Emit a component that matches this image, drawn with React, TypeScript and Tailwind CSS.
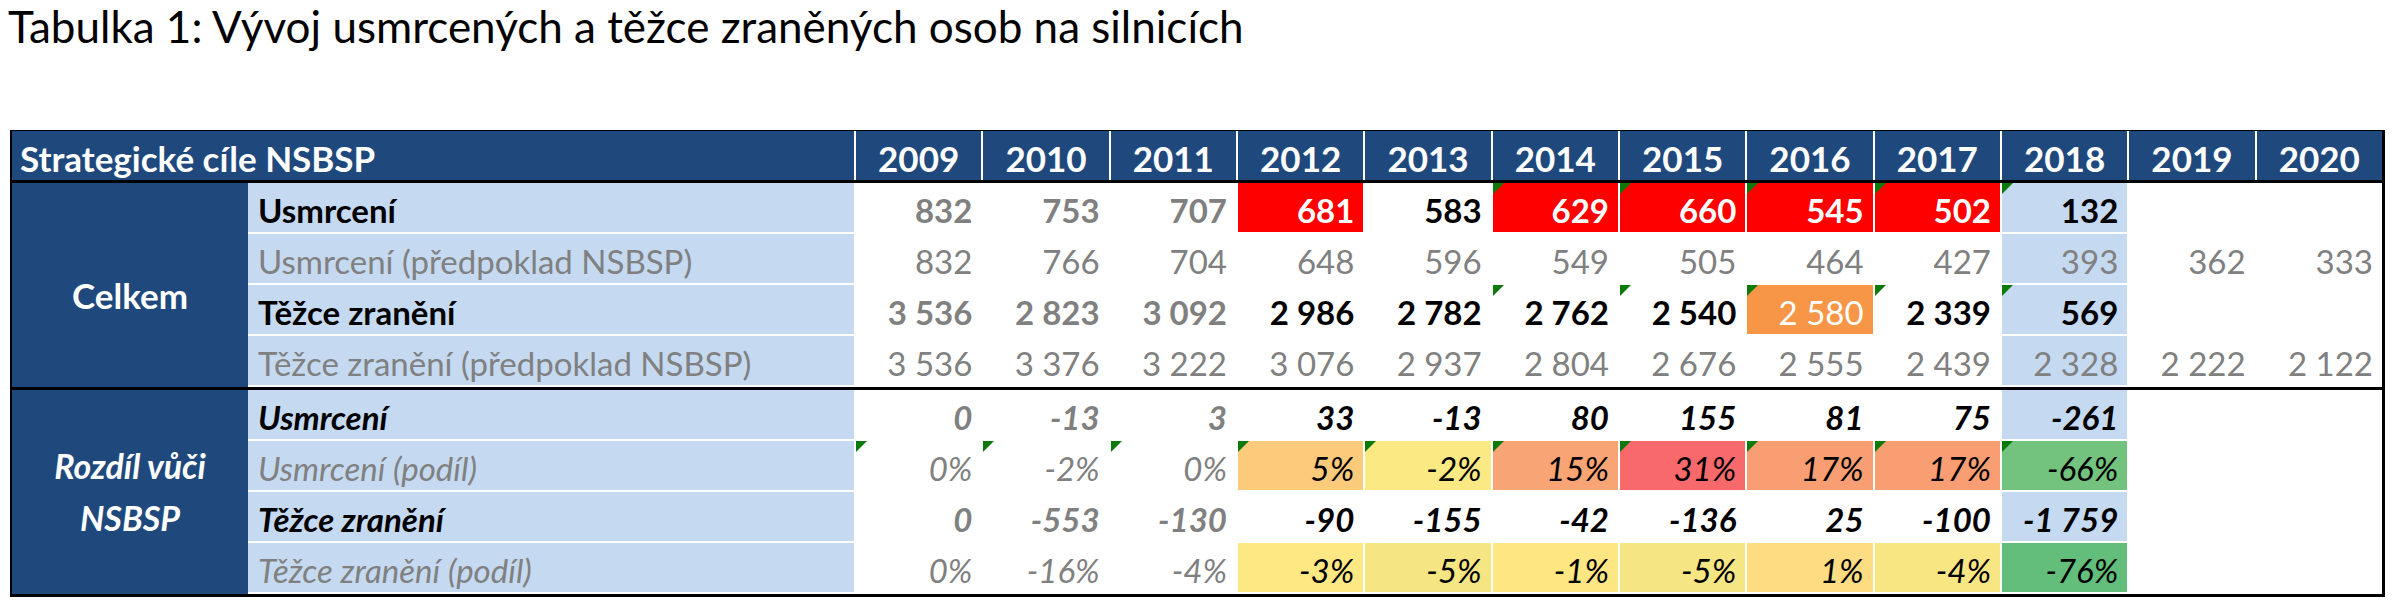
import React from 'react';

type Cell = {
  v: string;
  bg?: string;
  c?: 'g' | 'k' | 'w';
  b?: boolean;
  t?: boolean;
};

type Row = {
  label: string;
  labelBold: boolean;
  italic: boolean;
  cells: Cell[];
};

const years = [2009, 2010, 2011, 2012, 2013, 2014, 2015, 2016, 2017, 2018, 2019, 2020];

const E: Cell = { v: '' };

const section1: Row[] = [
  {
    label: 'Usmrcení',
    labelBold: true,
    italic: false,
    cells: [
      { v: '832', c: 'g', b: true },
      { v: '753', c: 'g', b: true },
      { v: '707', c: 'g', b: true },
      { v: '681', c: 'w', b: true, bg: 'red' },
      { v: '583', c: 'k', b: true },
      { v: '629', c: 'w', b: true, bg: 'red', t: true },
      { v: '660', c: 'w', b: true, bg: 'red', t: true },
      { v: '545', c: 'w', b: true, bg: 'red', t: true },
      { v: '502', c: 'w', b: true, bg: 'red', t: true },
      { v: '132', c: 'k', b: true, bg: 'lb', t: true },
      E,
      E,
    ],
  },
  {
    label: 'Usmrcení (předpoklad NSBSP)',
    labelBold: false,
    italic: false,
    cells: [
      { v: '832', c: 'g' },
      { v: '766', c: 'g' },
      { v: '704', c: 'g' },
      { v: '648', c: 'g' },
      { v: '596', c: 'g' },
      { v: '549', c: 'g' },
      { v: '505', c: 'g' },
      { v: '464', c: 'g' },
      { v: '427', c: 'g' },
      { v: '393', c: 'g', bg: 'lb' },
      { v: '362', c: 'g' },
      { v: '333', c: 'g' },
    ],
  },
  {
    label: 'Těžce zranění',
    labelBold: true,
    italic: false,
    cells: [
      { v: '3 536', c: 'g', b: true },
      { v: '2 823', c: 'g', b: true },
      { v: '3 092', c: 'g', b: true },
      { v: '2 986', c: 'k', b: true },
      { v: '2 782', c: 'k', b: true },
      { v: '2 762', c: 'k', b: true, t: true },
      { v: '2 540', c: 'k', b: true, t: true },
      { v: '2 580', c: 'w', bg: 'orange', t: true },
      { v: '2 339', c: 'k', b: true, t: true },
      { v: '569', c: 'k', b: true, bg: 'lb', t: true },
      E,
      E,
    ],
  },
  {
    label: 'Těžce zranění (předpoklad NSBSP)',
    labelBold: false,
    italic: false,
    cells: [
      { v: '3 536', c: 'g' },
      { v: '3 376', c: 'g' },
      { v: '3 222', c: 'g' },
      { v: '3 076', c: 'g' },
      { v: '2 937', c: 'g' },
      { v: '2 804', c: 'g' },
      { v: '2 676', c: 'g' },
      { v: '2 555', c: 'g' },
      { v: '2 439', c: 'g' },
      { v: '2 328', c: 'g', bg: 'lb' },
      { v: '2 222', c: 'g' },
      { v: '2 122', c: 'g' },
    ],
  },
];

const section2: Row[] = [
  {
    label: 'Usmrcení',
    labelBold: true,
    italic: true,
    cells: [
      { v: '0', c: 'g', b: true },
      { v: '-13', c: 'g', b: true },
      { v: '3', c: 'g', b: true },
      { v: '33', c: 'k', b: true },
      { v: '-13', c: 'k', b: true },
      { v: '80', c: 'k', b: true },
      { v: '155', c: 'k', b: true },
      { v: '81', c: 'k', b: true },
      { v: '75', c: 'k', b: true },
      { v: '-261', c: 'k', b: true, bg: 'lb' },
      E,
      E,
    ],
  },
  {
    label: 'Usmrcení (podíl)',
    labelBold: false,
    italic: true,
    cells: [
      { v: '0%', c: 'g', t: true },
      { v: '-2%', c: 'g', t: true },
      { v: '0%', c: 'g', t: true },
      { v: '5%', c: 'k', t: true, bg: 'c5' },
      { v: '-2%', c: 'k', t: true, bg: 'cm2' },
      { v: '15%', c: 'k', t: true, bg: 'c15' },
      { v: '31%', c: 'k', t: true, bg: 'c31' },
      { v: '17%', c: 'k', t: true, bg: 'c17' },
      { v: '17%', c: 'k', t: true, bg: 'c17' },
      { v: '-66%', c: 'k', t: true, bg: 'g66' },
      E,
      E,
    ],
  },
  {
    label: 'Těžce zranění',
    labelBold: true,
    italic: true,
    cells: [
      { v: '0', c: 'g', b: true },
      { v: '-553', c: 'g', b: true },
      { v: '-130', c: 'g', b: true },
      { v: '-90', c: 'k', b: true },
      { v: '-155', c: 'k', b: true },
      { v: '-42', c: 'k', b: true },
      { v: '-136', c: 'k', b: true },
      { v: '25', c: 'k', b: true },
      { v: '-100', c: 'k', b: true },
      { v: '-1 759', c: 'k', b: true, bg: 'lb' },
      E,
      E,
    ],
  },
  {
    label: 'Těžce zranění (podíl)',
    labelBold: false,
    italic: true,
    cells: [
      { v: '0%', c: 'g' },
      { v: '-16%', c: 'g' },
      { v: '-4%', c: 'g' },
      { v: '-3%', c: 'k', bg: 'y3' },
      { v: '-5%', c: 'k', bg: 'y5' },
      { v: '-1%', c: 'k', bg: 'y1' },
      { v: '-5%', c: 'k', bg: 'y5' },
      { v: '1%', c: 'k', bg: 'yp1' },
      { v: '-4%', c: 'k', bg: 'y4' },
      { v: '-76%', c: 'k', bg: 'g76' },
      E,
      E,
    ],
  },
];

const bgClass: Record<string, string> = {
  red: 'bg-[#ff0000]',
  orange: 'bg-[#f79646]',
  lb: 'bg-[#c5d9f1]',
  c5: 'bg-[#fbca7b]',
  cm2: 'bg-[#fbe983]',
  c15: 'bg-[#f9a474]',
  c31: 'bg-[#f8696b]',
  c17: 'bg-[#f99e73]',
  g66: 'bg-[#73c27d]',
  y3: 'bg-[#fde883]',
  y5: 'bg-[#f5e583]',
  y1: 'bg-[#fee783]',
  yp1: 'bg-[#fedc81]',
  y4: 'bg-[#f8e683]',
  g76: 'bg-[#63be7b]',
};

const colorClass: Record<string, string> = {
  g: 'text-[#808080]',
  k: 'text-black',
  w: 'text-white',
};

function Tri() {
  return (
    <svg className="absolute left-0 top-0" width="11" height="11" viewBox="0 0 11 11">
      <polygon points="0,0 11,0 0,11" fill="#0b7a0b" />
    </svg>
  );
}

function DataRow({ row }: { row: Row }) {
  const labelCls = [
    'w-[606px] shrink-0 bg-[#c5d9f1] border-b-2 border-white flex items-end pb-[2px] pl-[10px] whitespace-nowrap',
    row.labelBold ? 'font-bold text-black' : 'text-[#808080]',
    row.italic ? 'italic' : '',
  ].join(' ');
  return (
    <div className="flex h-[51px] text-[33px] leading-[40px]">
      <div className={labelCls}>{row.label}</div>
      {row.cells.map((cell, i) => {
        const cls = [
          'relative flex-1 border-l-2 border-b-2 border-white flex items-end justify-end pb-[2px] pr-[9px] whitespace-nowrap',
          cell.bg ? bgClass[cell.bg] : 'bg-white',
          cell.c ? colorClass[cell.c] : '',
          cell.b ? 'font-bold' : '',
          row.italic ? 'italic' : '',
        ].join(' ');
        return (
          <div key={i} className={cls}>
            {cell.t ? <Tri /> : null}
            {cell.v}
          </div>
        );
      })}
    </div>
  );
}

export default function App() {
  return (
    <div className="w-[2400px] h-[612px] bg-white text-black [font-family:Lato,'Noto_Sans',sans-serif] overflow-hidden">
      <div className="pl-[8px] text-[44px] leading-[53px] whitespace-nowrap">
        Tabulka 1: Vývoj usmrcených a těžce zraněných osob na silnicích
      </div>
      <div className="ml-[10px] mt-[77px] w-[2375px] border-t border-l-2 border-r-[3px] border-b-[3px] border-black">
        <div className="flex h-[52px] bg-[#1f497d] border-b-[3px] border-black text-white font-bold text-[35px] leading-[40px]">
          <div className="w-[842px] shrink-0 flex items-end pb-[2px] pl-[8px] whitespace-nowrap">
            Strategické cíle NSBSP
          </div>
          {years.map((y) => (
            <div key={y} className="flex-1 border-l-2 border-white flex items-end justify-center pb-[2px]">
              {y}
            </div>
          ))}
        </div>
        <div className="flex h-[204px]">
          <div className="w-[236px] shrink-0 bg-[#1f497d] flex items-center justify-center pt-[20px] text-white font-bold text-[35px] leading-[40px]">
            Celkem
          </div>
          <div className="flex-1 flex flex-col">
            {section1.map((r, i) => (
              <DataRow key={i} row={r} />
            ))}
          </div>
        </div>
        <div className="h-[3px] bg-black" />
        <div className="flex h-[204px]">
          <div className="w-[236px] shrink-0 bg-[#1f497d] flex items-center justify-center text-white font-bold italic text-[34px] leading-[52px] text-center">
            <div>
              Rozdíl vůči
              <br />
              NSBSP
            </div>
          </div>
          <div className="flex-1 flex flex-col">
            {section2.map((r, i) => (
              <DataRow key={i} row={r} />
            ))}
          </div>
        </div>
      </div>
    </div>
  );
}
